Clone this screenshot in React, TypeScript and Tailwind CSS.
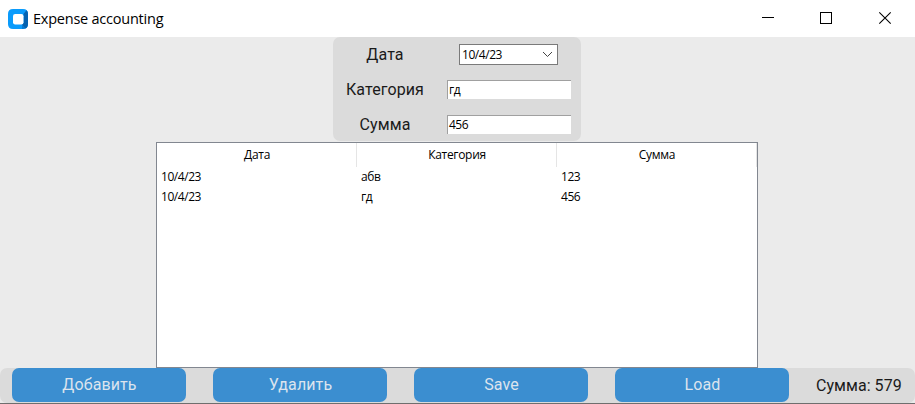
import React from "react";

const rows = [
  { date: "10/4/23", category: "абв", amount: "123" },
  { date: "10/4/23", category: "гд", amount: "456" },
];

const columns = ["Дата", "Категория", "Сумма"];

const actions = ["Добавить", "Удалить", "Save", "Load"];

function TitleBar() {
  return (
    <header className="flex h-[37px] shrink-0 items-center bg-white">
      <svg className="ml-2 h-5 w-5" viewBox="0 0 20 20">
        <path d="M5 0H15Q20 0 20 5V15Q20 20 15 20H5Q0 20 0 15V5Q0 0 5 0Z" fill="#0a9bfb" />
        <path d="M18.5 1.3Q20 2.5 20 5V15Q20 18.5 17 19.6L14 15.5L15.5 14V5Z" fill="#0562b0" />
        <path d="M14 15.5L17 19.6Q16 20 14 20Z" fill="#0878d0" />
        <rect x="5" y="5" width="10.5" height="10.5" rx="2.2" fill="#fff" />
      </svg>
      <h1 className="ml-[5px] flex-1 font-['Open_Sans',sans-serif] text-[14.5px] leading-5 tracking-[-0.23px] text-black">
        Expense accounting
      </h1>
      <div className="flex items-center" aria-label="Window controls">
        <svg className="h-[37px] w-[58px]" viewBox="0 0 58 37" shapeRendering="crispEdges">
          <path d="M10 17.5H22" stroke="#000" />
        </svg>
        <svg className="h-[37px] w-[58px]" viewBox="0 0 58 37" shapeRendering="crispEdges">
          <rect x="10.5" y="12.5" width="11" height="11" fill="none" stroke="#000" />
        </svg>
        <svg className="h-[37px] w-[47px]" viewBox="0 0 47 37">
          <path d="M11.3 12.3L22.7 23.7M22.7 12.3L11.3 23.7" fill="none" stroke="#000" strokeWidth="1.1" />
        </svg>
      </div>
    </header>
  );
}

function FormLabel({ children }: { children: React.ReactNode }) {
  return (
    <span className="w-[103px] pt-px pl-px text-center font-[Roboto,sans-serif] text-base leading-5 tracking-[0.1px] text-[#1a1a1a]">
      {children}
    </span>
  );
}

function Entry({ value }: { value: string }) {
  return (
    <div className="ml-[11px] flex h-[19px] w-[124px] items-center border-t border-l border-[#a0a0a0] bg-white pl-px font-['Open_Sans',sans-serif] text-[12px] leading-4 tracking-[-0.5px] text-black">
      {value}
    </div>
  );
}

function Form() {
  return (
    <section className="flex h-[104px] w-[248px] shrink-0 flex-col rounded-[7px] bg-[#dbdbdb]">
      <div className="flex h-[35px] shrink-0 items-center">
        <FormLabel>Дата</FormLabel>
        <div className="ml-[23px] flex h-[21px] w-[99px] items-center justify-between border border-[#7a7a7a] bg-white pr-1 pl-0.5 font-['Open_Sans',sans-serif] text-[12px] leading-4 tracking-[-0.45px] text-black">
          <span>10/4/23</span>
          <svg className="h-[7px] w-[11px]" viewBox="0 0 11 7">
            <path d="M1 1L5.5 5.5L10 1" fill="none" stroke="#444" />
          </svg>
        </div>
      </div>
      <div className="flex h-[35px] shrink-0 items-center">
        <FormLabel>Категория</FormLabel>
        <Entry value="гд" />
      </div>
      <div className="flex h-[35px] shrink-0 items-center">
        <FormLabel>Сумма</FormLabel>
        <Entry value="456" />
      </div>
    </section>
  );
}

function ExpenseTable() {
  return (
    <section className="mt-px flex h-[226px] w-[602px] flex-col border border-[#828790] bg-white font-['Open_Sans',sans-serif] text-[12px] leading-4 text-black">
      <div className="grid h-6 grid-cols-3">
        {columns.map((name) => (
          <div key={name} className="flex items-center justify-center border-r border-[#e5e5e5] pl-px tracking-[-0.3px]">
            {name}
          </div>
        ))}
      </div>
      {rows.map((row) => (
        <div key={row.category} className="grid h-5 grid-cols-3 items-center tracking-[-0.45px]">
          <span className="pl-1">{row.date}</span>
          <span className="pl-1">{row.category}</span>
          <span className="pl-1">{row.amount}</span>
        </div>
      ))}
    </section>
  );
}

export default function App() {
  return (
    <div className="flex h-[404px] w-[915px] flex-col overflow-hidden bg-[#ebebeb]">
      <TitleBar />
      <main className="flex h-[331px] shrink-0 flex-col items-center pr-px">
        <Form />
        <ExpenseTable />
      </main>
      <footer className="flex h-[36px] shrink-0 border-b border-[#6e6e6e] font-[Roboto,sans-serif] text-base">
        <div className="flex h-[35px] w-full items-start rounded-[7px] bg-[#dbdbdb] pl-3">
          <div className="flex gap-[27px]">
            {actions.map((label) => (
              <button
                key={label}
                className="h-[34px] w-[174px] rounded-[7px] bg-[#3b8ed0] pb-px pl-px tracking-[0.1px] text-[#dce4ee]"
              >
                {label}
              </button>
            ))}
          </div>
          <span className="ml-[27px] pt-px leading-[34px] tracking-[0.05px] text-[#1a1a1a]">Сумма: 579</span>
        </div>
      </footer>
    </div>
  );
}
